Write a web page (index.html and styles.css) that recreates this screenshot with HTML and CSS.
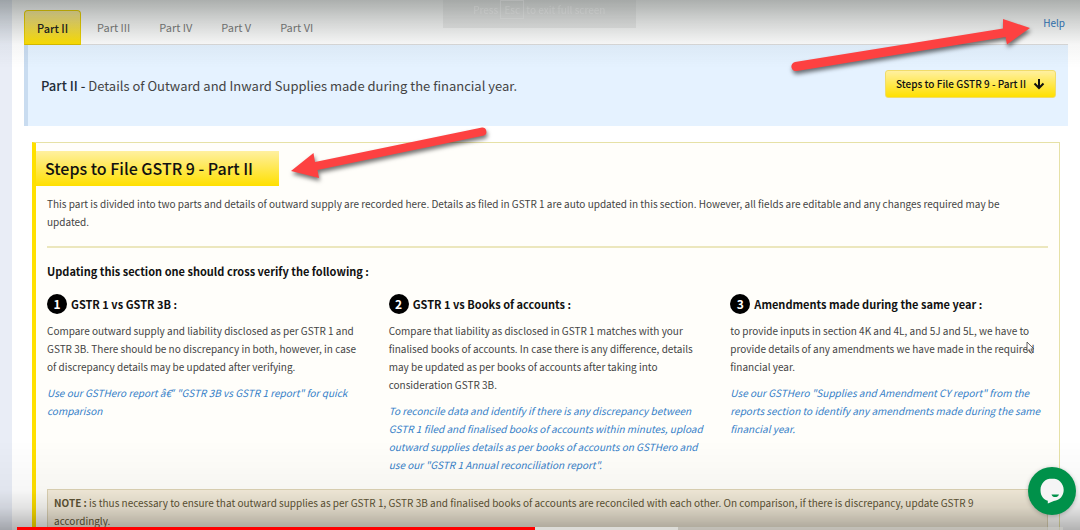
FILE: index.html
```html
<!DOCTYPE html>
<html lang="en">
<head>
<meta charset="utf-8">
<title>GSTR 9 - Part II</title>
<link rel="stylesheet" href="styles.css">
</head>
<body>
<div class="page">
  <main class="content">
    <header class="topbar">
      <nav class="tabs" aria-label="Parts">
        <button class="tab tab-active" type="button">Part II</button>
        <button class="tab" type="button">Part III</button>
        <button class="tab" type="button">Part IV</button>
        <button class="tab" type="button">Part V</button>
        <button class="tab" type="button">Part VI</button>
      </nav>
      <a class="help" href="#help">Help</a>
    </header>
    <section class="banner">
      <p class="banner-text"><strong>Part II - </strong>Details of Outward and Inward Supplies made during the financial year.</p>
      <button class="steps-button" type="button">Steps to File GSTR 9 - Part II
        <svg class="down-icon" viewBox="0 0 12 12" aria-hidden="true"><path d="M6 1v9M1.500 5.500L6 10l4.500-4.500" fill="none" stroke="#111" stroke-width="2"/></svg>
      </button>
    </section>
    <section class="panel">
      <h1 class="panel-title">Steps to File GSTR 9 - Part II</h1>
      <div class="panel-body">
        <p class="intro">This part is divided into two parts and details of outward supply are recorded here. Details as filed in GSTR 1 are auto updated in this section. However, all fields are editable and any changes required may be<br>updated.</p>
        <h2 class="subtitle">Updating this section one should cross verify the following :</h2>
        <div class="columns">
          <article class="step">
            <h3 class="step-title"><span class="number">1</span>GSTR 1 vs GSTR 3B :</h3>
            <p>Compare outward supply and liability disclosed as per GSTR 1 and<br>GSTR 3B. There should be no discrepancy in both, however, in case<br>of discrepancy details may be updated after verifying.</p>
            <a class="report" href="#report-3b">Use our GSTHero report â€<span class="quote">“</span> "GSTR 3B vs GSTR 1 report" for quick<br>comparison</a>
          </article>
          <article class="step">
            <h3 class="step-title"><span class="number">2</span>GSTR 1 vs Books of accounts :</h3>
            <p>Compare that liability as disclosed in GSTR 1 matches with your<br>finalised books of accounts. In case there is any difference, details<br>may be updated as per books of accounts after taking into<br>consideration GSTR 3B.</p>
            <a class="report" href="#report-annual">To reconcile data and identify if there is any discrepancy between<br>GSTR 1 filed and finalised books of accounts within minutes, upload<br>outward supplies details as per books of accounts on GSTHero and<br>use our "GSTR 1 Annual reconciliation report".</a>
          </article>
          <article class="step">
            <h3 class="step-title"><span class="number">3</span>Amendments made during the same year :</h3>
            <p>to provide inputs in section 4K and 4L, and 5J and 5L, we have to<br>provide details of any amendments we have made in the required<br>financial year.</p>
            <a class="report" href="#report-amend">Use our GSTHero "Supplies and Amendment CY report" from the<br>reports section to identify any amendments made during the same<br>financial year.</a>
          </article>
        </div>
        <p class="note"><strong>NOTE : </strong>is thus necessary to ensure that outward supplies as per GSTR 1, GSTR 3B and finalised books of accounts are reconciled with each other. On comparison, if there is discrepancy, update GSTR 9<br>accordingly.</p>
      </div>
    </section>
  </main>
</div>
<div class="shade shade-top"></div>
<div class="shade shade-bottom"></div>
<div class="hint">Press <kbd>Esc</kbd> to exit full screen</div>
<button class="chat" type="button" aria-label="Chat">
  <svg viewBox="0 0 48 48" aria-hidden="true"><path d="M24 11.500c-6.600 0-11.500 4.800-11.500 11.500 0 6.200 3.200 9.600 7.300 10.800v2.600l6-2.300c6-.9 9.900-5.300 9.900-11.100 0-6.700-5-11.500-11.700-11.500z" fill="#f5f5f5"/><path d="M23.500 27.500h7.500c-.8 2-2 2.600-3.800 2.600s-3-.7-3.700-2.600z" fill="#00914a"/></svg>
</button>
<div class="player"><div class="played"></div><div class="loaded"></div></div>
<svg class="annotations" viewBox="0 0 1080 530" aria-hidden="true">
  <g class="arrow">
    <path d="M795 62L1003 28.500V19L1030 28L1007 44.500L1005.500 37L797 71A4.500 4.500 0 0 1 795 62z"/>
    <path d="M482 127.500L315 162L313.500 153L291 171L319 178L317.500 170L484 135.500A4.200 4.200 0 0 0 482 127.500z"/>
  </g>
  <path d="M1027 342v9.500l2.200-2 1.800 3.800 1.600-.8-1.700-3.600h2.900z" fill="#fff" stroke="#444" stroke-width=".8"/>
</svg>
</body>
</html>
```
FILE: styles.css
```css
* { box-sizing: border-box; }
html, body { height: 100%; }
body {
  margin: 0;
  overflow: hidden;
  background: #fff;
  color: #444;
  font: 10px/18px "Noto Sans CJK SC", "Open Sans", sans-serif;
}
p, h1, h2, h3 { margin: 0; }
button { font: inherit; cursor: pointer; }
a { color: #3580c8; text-decoration: none; }

.page { min-height: 100%; border-left: 12px solid #e9edf6; }
.content { padding: 10px 12px 0; }
.topbar { display: flex; justify-content: space-between; border-bottom: 1px solid #dcdcdc; }
.tabs { display: flex; gap: 3px; }
.tab {
  height: 34px;
  padding: 0 13px;
  border: 0;
  background: none;
  color: #808080;
  font-size: 11px;
}
.tab-active {
  height: 35px;
  margin-bottom: -1px;
  border: 1px solid #efd400;
  border-bottom-color: #d9bd00;
  border-radius: 4px 4px 0 0;
  padding: 0 12px;
  background: linear-gradient(#fff0a0, #ffe000);
  color: #222;
  font-weight: 500;
}
.help { padding: 4px 3px; }

.banner {
  display: flex;
  align-items: center;
  justify-content: space-between;
  gap: 16px;
  min-height: 81px;
  padding: 0 12px 0 13px;
  border-left: 4px solid #c9dcf0;
  background: #e5f2ff;
}
.banner-text { font-size: 13px; line-height: 20px; }
.banner-text strong { color: #222c38; font-weight: 500; }
.steps-button {
  display: flex;
  align-items: center;
  gap: 7px;
  height: 28px;
  margin-top: -4px;
  padding: 0 10px;
  border: 1px solid #f0dc6a;
  border-radius: 3px;
  background: linear-gradient(#fff0a0, #ffe000);
  color: #111;
  font-weight: 500;
}
.down-icon { width: 12px; height: 12px; }

.panel {
  margin: 16px 8px 0;
  padding-top: 8px;
  border: 1px solid #e6e1a6;
  border-left: 4px solid #ffe000;
  background: #fffefa;
}
.panel-title {
  display: inline-block;
  min-width: 243px;
  padding: 0 26px 0 9px;
  background: linear-gradient(#fff0a0, #ffe000);
  color: #111;
  font-size: 16px;
  font-weight: 500;
  line-height: 35px;
  vertical-align: top;
}
.panel-body { padding: 9px 11px 24px; }
.intro { padding-bottom: 15px; border-bottom: 2px solid #ece7bd; }
.subtitle { margin-top: 14px; color: #111; font-size: 11px; font-weight: 700; line-height: 18px; }
.columns { display: grid; grid-template-columns: repeat(3, 1fr); gap: 24px; margin-top: 14px; }
.step-title {
  display: flex;
  align-items: center;
  gap: 4px;
  margin-bottom: 8px;
  color: #111;
  font-size: 11px;
  font-weight: 700;
  line-height: 20px;
}
.number {
  width: 20px;
  border-radius: 50%;
  background: #000;
  color: #fff;
  font-size: 12px;
  font-weight: 700;
  text-align: center;
}
.report { display: block; margin-top: 8px; font-style: italic; }
.quote { font-family: "Open Sans", sans-serif; line-height: 1; }
.note {
  margin-top: 15px;
  padding: 4px 6px;
  border: 1px solid #ddd3b4;
  background: #f5eddb;
  color: #5f5535;
}
.note strong { font-weight: 700; }

.shade { position: fixed; left: 0; right: 0; pointer-events: none; }
.shade-top {
  top: 0;
  height: 68px;
  background: linear-gradient(rgba(10, 20, 15, .34), rgba(10, 20, 15, .19) 30%, rgba(10, 20, 15, .04) 65%, transparent);
}
.shade-bottom {
  bottom: 0;
  height: 90px;
  background: linear-gradient(transparent, rgba(0, 0, 0, .03) 55%, rgba(0, 0, 0, .11) 75%, rgba(0, 0, 0, .3));
}
.hint {
  position: fixed;
  top: 0;
  left: 41%;
  width: 193px;
  height: 28px;
  background: rgba(125, 125, 125, .13);
  color: rgba(225, 225, 225, .25);
  line-height: 20px;
  text-align: center;
}
.hint kbd { padding: 1px 3px; border: 1px solid rgba(225, 225, 225, .2); font: inherit; }
.chat {
  position: fixed;
  right: 4px;
  bottom: 15px;
  width: 48px;
  height: 48px;
  padding: 0;
  border: 0;
  border-radius: 50%;
  background: #00914a;
  box-shadow: 0 1px 4px rgba(0, 0, 0, .25);
}
.chat svg { display: block; }
.player {
  position: fixed;
  left: 17px;
  right: 17px;
  bottom: 0;
  display: flex;
  height: 3px;
  background: rgba(205, 205, 200, .6);
}
.played { width: 49.5%; background: #f00; }
.loaded { width: 13.7%; background: #dcdcd8; }
.annotations { position: fixed; top: 0; left: 0; width: 1080px; height: 530px; pointer-events: none; }
.arrow { fill: #fd4141; filter: drop-shadow(1px 3px 2px rgba(0, 0, 0, .55)); }
```
